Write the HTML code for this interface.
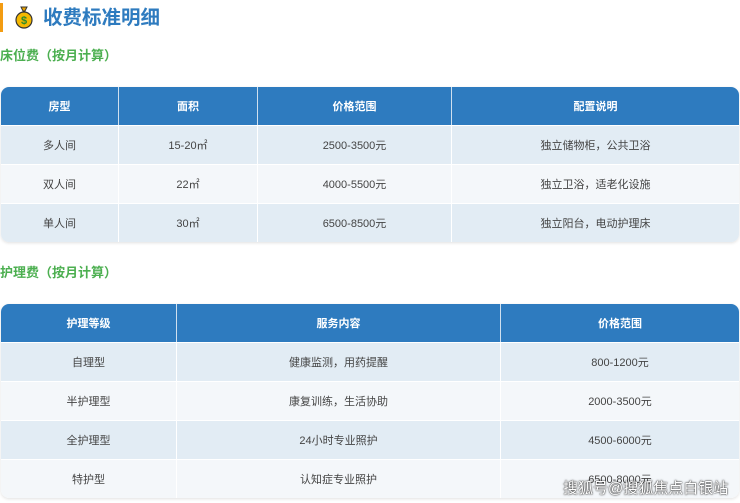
<!DOCTYPE html>
<html><head><meta charset="utf-8"><style>
*{margin:0;padding:0;box-sizing:border-box}
body{width:740px;height:503px;background:#fff;font-family:"Liberation Sans","Noto Sans CJK SC",sans-serif;position:relative;overflow:hidden}
.bar{position:absolute;left:0;top:3px;width:3px;height:29px;background:#f39c12}
.title{position:absolute;left:43px;top:3px;font-size:19.5px;font-weight:bold;color:#2e7bbf;line-height:30px}
.icon{position:absolute;left:14px;top:5px}
.sub{position:absolute;left:0;font-size:13px;font-weight:bold;color:#4caf50;line-height:18px}
table{position:absolute;left:1px;width:738px;border-collapse:separate;border-spacing:0;border-radius:8px;overflow:hidden;box-shadow:0 1px 3px rgba(0,0,0,.12);font-size:11px;color:#444;text-align:center}
th{background:#2e7bbf;color:#fff;font-weight:bold;height:38px;border-right:1px solid #cfe0ef}
td{height:39px;border-right:1px solid #fff;border-top:1px solid #fff}
th:last-child,td:last-child{border-right:none}
tr.a td{background:#e2ecf4}
tr.b td{background:#f4f7fa}
.wm{position:absolute;left:563px;top:477px;font-size:15px;color:#fff;text-shadow:0 0 2px #333,0 0 1px #000;letter-spacing:0}
</style></head><body>
<div class="bar"></div>
<svg class="icon" width="20" height="24" viewBox="0 0 20 24"><path d="M7 2h6l-2 4h-2z" fill="#e6a100" stroke="#333" stroke-width="1"/><ellipse cx="10" cy="15" rx="8" ry="8" fill="#f5b800" stroke="#333" stroke-width="1.2"/><text x="10" y="19" font-size="11" font-weight="bold" text-anchor="middle" fill="#2a8a2a" font-family="Liberation Sans">$</text></svg>
<div class="title">收费标准明细</div>
<div class="sub" style="top:47px">床位费（按月计算）</div>
<table style="top:87px">
<tr><th style="width:118px">房型</th><th style="width:139px">面积</th><th style="width:194px">价格范围</th><th>配置说明</th></tr>
<tr class="a"><td>多人间</td><td>15-20㎡</td><td>2500-3500元</td><td>独立储物柜，公共卫浴</td></tr>
<tr class="b"><td>双人间</td><td>22㎡</td><td>4000-5500元</td><td>独立卫浴，适老化设施</td></tr>
<tr class="a"><td>单人间</td><td>30㎡</td><td>6500-8500元</td><td>独立阳台，电动护理床</td></tr>
</table>
<div class="sub" style="top:264px">护理费（按月计算）</div>
<table style="top:304px">
<tr><th style="width:176px">护理等级</th><th style="width:324px">服务内容</th><th>价格范围</th></tr>
<tr class="a"><td>自理型</td><td>健康监测，用药提醒</td><td>800-1200元</td></tr>
<tr class="b"><td>半护理型</td><td>康复训练，生活协助</td><td>2000-3500元</td></tr>
<tr class="a"><td>全护理型</td><td>24小时专业照护</td><td>4500-6000元</td></tr>
<tr class="b"><td>特护型</td><td>认知症专业照护</td><td>6500-8000元</td></tr>
</table>
<div class="wm">搜狐号@搜狐焦点白银站</div>
</body></html>
